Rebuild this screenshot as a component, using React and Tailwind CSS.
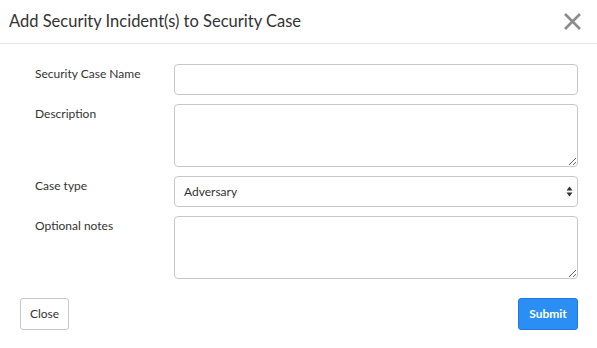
import React from 'react';

function FieldRow({ label, children, className = '' }) {
    return (
        <div className={`flex ${className}`}>
            <label className="w-[139px] shrink-0 pt-[2px] text-[12px] leading-[16px] text-[#333]">{label}</label>
            <div className="flex-1">{children}</div>
        </div>
    );
}

export default function App() {
    const inputCls = 'block w-full rounded-[4px] border border-[#c8c8cc] bg-white outline-none';
    return (
        <div className="w-[597px] h-[348px] bg-white font-['Lato','Open_Sans',sans-serif] text-[#333]">
            {/* header */}
            <div className="flex h-[44px] items-center justify-between border-b border-[#e5e5e5] pl-[9px] pr-[15px]">
                <h2 className="text-[16.5px] text-[#333]">Add Security Incident(s) to Security Case</h2>
                <svg width="19" height="19" viewBox="0 0 19 19" className="mt-[-1px]">
                    <path d="M2 2 L17 17 M17 2 L2 17" stroke="#8c8c8c" strokeWidth="2.6" strokeLinecap="butt" />
                </svg>
            </div>

            {/* body */}
            <div className="pl-[35px] pr-[19px] pt-[20px]">
                <FieldRow label="Security Case Name">
                    <input className={`${inputCls} h-[31px]`} />
                </FieldRow>
                <FieldRow label="Description" className="mt-[9px]">
                    <textarea className={`${inputCls} h-[63px] resize-y`} />
                </FieldRow>
                <FieldRow label="Case type" className="mt-[9px]">
                    <div className="relative">
                        <div className={`${inputCls} flex h-[31px] items-center pl-[9px] text-[12px]`}>Adversary</div>
                        <svg width="7" height="11" viewBox="0 0 7 11" className="absolute right-[5px] top-[10px]">
                            <path d="M0.5 4.5 L3.5 0.5 L6.5 4.5 Z M0.5 6.5 L3.5 10.5 L6.5 6.5 Z" fill="#333" />
                        </svg>
                    </div>
                </FieldRow>
                <FieldRow label="Optional notes" className="mt-[9px]">
                    <textarea className={`${inputCls} h-[63px] resize-y`} />
                </FieldRow>
            </div>

            {/* footer */}
            <div className="flex justify-between pl-[20px] pr-[19px] pt-[19px]">
                <button className="h-[32px] w-[49px] rounded-[3px] border border-[#c8c8cc] bg-white text-[12px] text-[#333]">Close</button>
                <button className="h-[32px] w-[60px] rounded-[3px] border border-[#1f7ae0] bg-[#2b8ef5] text-[12px] font-bold text-white">Submit</button>
            </div>
        </div>
    );
}
